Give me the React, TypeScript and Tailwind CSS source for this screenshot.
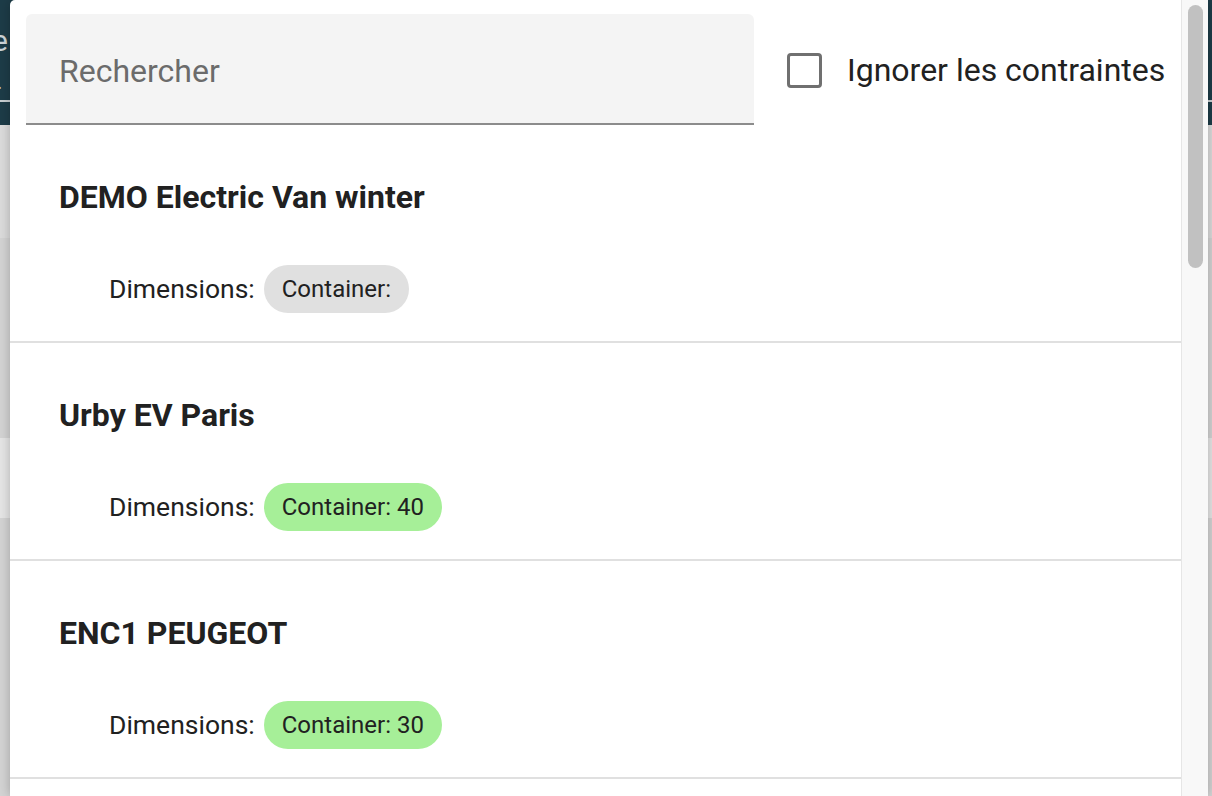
import React from "react";

const items = [
  { title: "DEMO Electric Van winter", chip: "Container:", green: false },
  { title: "Urby EV Paris", chip: "Container: 40", green: true },
  { title: "ENC1 PEUGEOT", chip: "Container: 30", green: true },
  { title: "", chip: "", green: false },
];

export default function App() {
  return (
    <div
      className="relative w-[1212px] h-[796px] overflow-hidden bg-[#d8d8d8]"
      style={{ fontFamily: "Roboto, 'Noto Sans', sans-serif" }}
    >
      {/* page behind the dialog (dimmed) */}
      <div className="flex flex-col w-full h-full">
        <div className="h-[125px] bg-[#1d3c48] flex flex-col">
          <div className="h-[72px] pt-[26px] text-[#cfd6d9] text-[30px] leading-none -ml-[8px]">e</div>
          <div className="h-[28px] text-[#cfd6d9] text-[20px] leading-none -ml-[3px]">.</div>
          <div className="h-[2px] bg-[#c9d0d3]" />
        </div>
        <div className="h-[113px] bg-[#dcdcdc]" />
        <div className="h-[200px] bg-[#d4d4d4]" />
        <div className="h-[80px] bg-[#e6e6e6]" />
        <div className="flex-1 bg-[#d4d4d4]" />
      </div>

      {/* dialog */}
      <div className="absolute left-[10px] top-0 w-[1198px] h-[796px] bg-white rounded-tl-[5px] flex shadow-[0_0_12px_rgba(0,0,0,0.25)]">
        <div className="w-[1171px] flex flex-col">
          {/* header */}
          <div className="flex items-start pl-[16px] pt-[14px] h-[128px]">
            <div className="w-[728px] h-[111px] bg-[#f4f4f4] rounded-t-[6px] border-b-[2px] border-[#8c8c8c] flex items-center pl-[33px] pt-[4px]">
              <span className="text-[32px] text-[#6b6b6b]">Rechercher</span>
            </div>
            <div className="flex items-center ml-[33px] h-[111px] pt-[1px]">
              <div className="w-[35px] h-[35px] border-[3px] border-[#707070] rounded-[4px] box-border" />
              <span className="ml-[25px] text-[32px] text-[#212121]">Ignorer les contraintes</span>
            </div>
          </div>
          {/* list */}
          {items.map((it, i) => (
            <div key={i} className="pt-[55px] pb-[28px] border-b-[2px] border-[#e0e0e0] shrink-0">
              <div className="pl-[49px] h-[32px] flex items-center pt-[2px] text-[32px] leading-none font-bold text-[#212121]">
                {it.title}
              </div>
              <div className="mt-[53px] pl-[99px] h-[48px] flex items-center">
                {it.title && (
                  <>
                    <span className="text-[26.5px] text-[#212121]">Dimensions:</span>
                    <span
                      className={
                        it.green
                          ? "ml-[9px] h-[48px] px-[18px] rounded-full bg-[#a6ef98] flex items-center text-[24px] text-[#212121]"
                          : "ml-[9px] h-[48px] px-[18px] rounded-full bg-[#e0e0e0] flex items-center text-[24px] text-[#212121]"
                      }
                    >
                      {it.chip}
                    </span>
                  </>
                )}
              </div>
            </div>
          ))}
        </div>
        {/* scrollbar */}
        <div className="w-[27px] bg-[#f8f8f8] border-l border-[#e6e6e6] pt-[5px] pl-[6px]">
          <div className="w-[15px] h-[263px] rounded-full bg-[#c1c1c1]" />
        </div>
      </div>
    </div>
  );
}
